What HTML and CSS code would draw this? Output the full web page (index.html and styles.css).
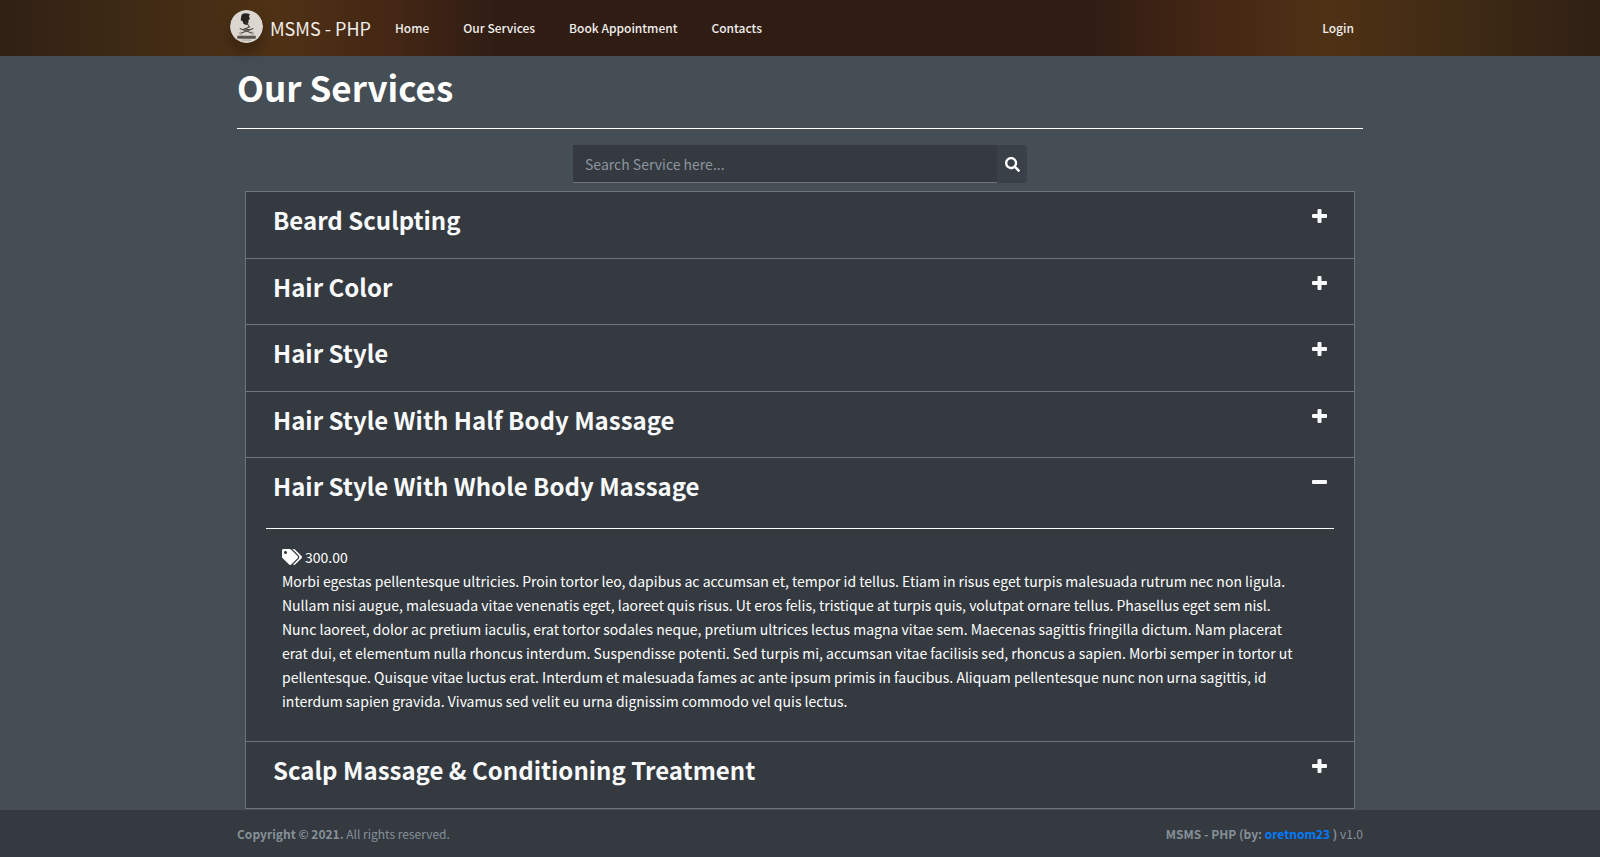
FILE: index.html
```
<!DOCTYPE html>
<html lang="en">
<head>
<meta charset="utf-8">
<meta name="viewport" content="width=device-width, initial-scale=1">
<title>MSMS - PHP</title>
<link rel="stylesheet" href="styles.css">
</head>
<body>
<svg class="sprite" aria-hidden="true">
  <symbol id="plus" viewBox="0 0 15 14"><path d="M6.500 0h2q1 0 1 1v4H14q1 0 1 1v2q0 1-1 1H9.500v4q0 1-1 1h-2q-1 0-1-1V9H1Q0 9 0 8V6q0-1 1-1h4.500V1q0-1 1-1z"/></symbol>
  <symbol id="minus" viewBox="0 0 15 14"><rect y="5" width="15" height="4" rx="1"/></symbol>
</svg>
<header class="navbar">
  <div class="container navbar-inner">
    <a class="brand" href="#">
      <svg class="logo" viewBox="0 0 34 34" aria-hidden="true">
        <circle cx="17" cy="17" r="17" fill="#dcd6d0"/>
        <path d="M11.500 7c0-3 3-4 6-3.500l3 .5-1 2.500 1 2.500-1.500 1.500v3l-2 2-3-1-1-3-2-1z" fill="#26221f"/>
        <path d="M17 13l3 4.500-5 2 6 1M10 19l13 5M24 19l-13 5" fill="none" stroke="#4b443e" stroke-width="1.100"/>
        <circle cx="11" cy="24" r="1.300" fill="none" stroke="#8d857e" stroke-width=".7"/>
        <circle cx="23" cy="24" r="1.300" fill="none" stroke="#8d857e" stroke-width=".7"/>
        <path d="M7.500 28h19" stroke="#5b544e" stroke-width="3"/>
        <path d="M12 31h10" stroke="#a39c95" stroke-width="1"/>
      </svg>
      <span>MSMS - PHP</span>
    </a>
    <nav class="nav">
      <a href="#">Home</a>
      <a href="#">Our Services</a>
      <a href="#">Book Appointment</a>
      <a href="#">Contacts</a>
    </nav>
    <a class="login" href="#">Login</a>
  </div>
</header>
<main class="container content">
  <h1 class="title">Our Services</h1>
  <hr class="rule">
  <form class="search" role="search">
    <input class="search-input" type="search" placeholder="Search Service here..." aria-label="Search Service">
    <button class="search-button" type="button" aria-label="Search">
      <svg viewBox="0 0 512 512" aria-hidden="true"><path d="M505 442.700L405.300 343c-4.500-4.500-10.600-7-17-7H372c27.600-35.300 44-79.700 44-128C416 93.100 322.900 0 208 0S0 93.100 0 208s93.100 208 208 208c48.300 0 92.700-16.400 128-44v16.300c0 6.400 2.500 12.500 7 17l99.700 99.700c9.400 9.400 24.600 9.400 33.900 0l28.300-28.300c9.400-9.400 9.400-24.600.1-34zM208 336c-70.700 0-128-57.200-128-128 0-70.700 57.200-128 128-128 70.700 0 128 57.200 128 128 0 70.700-57.200 128-128 128z"/></svg>
    </button>
  </form>
  <div class="services">
    <section class="service"><button class="service-head" type="button" aria-expanded="false"><span>Beard Sculpting</span><svg class="toggle"><use href="#plus"/></svg></button></section>
    <section class="service"><button class="service-head" type="button" aria-expanded="false"><span>Hair Color</span><svg class="toggle"><use href="#plus"/></svg></button></section>
    <section class="service"><button class="service-head" type="button" aria-expanded="false"><span>Hair Style</span><svg class="toggle"><use href="#plus"/></svg></button></section>
    <section class="service"><button class="service-head" type="button" aria-expanded="false"><span>Hair Style With Half Body Massage</span><svg class="toggle"><use href="#plus"/></svg></button></section>
    <section class="service">
      <button class="service-head" type="button" aria-expanded="true"><span>Hair Style With Whole Body Massage</span><svg class="toggle"><use href="#minus"/></svg></button>
      <div class="service-body">
        <div class="price">
          <svg class="tags" viewBox="0 0 640 512" aria-hidden="true"><path d="M497.941 225.941L286.059 14.059A48 48 0 0 0 252.118 0H48C21.490 0 0 21.490 0 48v204.118a48 48 0 0 0 14.059 33.941l211.882 211.882c18.744 18.745 49.136 18.746 67.882 0l204.118-204.118c18.745-18.745 18.745-49.137 0-67.882zM112 160c-26.510 0-48-21.490-48-48s21.490-48 48-48 48 21.490 48 48-21.490 48-48 48zm513.941 133.823L421.823 497.941c-18.745 18.745-49.137 18.745-67.882 0l-.36-.36L527.640 323.522c16.999-16.999 26.360-39.600 26.360-63.640s-9.362-46.641-26.360-63.640L331.397 0h48.721a48 48 0 0 1 33.941 14.059l211.882 211.882c18.745 18.745 18.745 49.137 0 67.882z"/></svg>
          <span>300.00</span>
        </div>
        <p class="description">Morbi egestas pellentesque ultricies. Proin tortor leo, dapibus ac accumsan et, tempor id tellus. Etiam in risus eget turpis malesuada rutrum nec non ligula. Nullam nisi augue, malesuada vitae venenatis eget, laoreet quis risus. Ut eros felis, tristique at turpis quis, volutpat ornare tellus. Phasellus eget sem nisl. Nunc laoreet, dolor ac pretium iaculis, erat tortor sodales neque, pretium ultrices lectus magna vitae sem. Maecenas sagittis fringilla dictum. Nam placerat erat dui, et elementum nulla rhoncus interdum. Suspendisse potenti. Sed turpis mi, accumsan vitae facilisis sed, rhoncus a sapien. Morbi semper in tortor ut pellentesque. Quisque vitae luctus erat. Interdum et malesuada fames ac ante ipsum primis in faucibus. Aliquam pellentesque nunc non urna sagittis, id interdum sapien gravida. Vivamus sed velit eu urna dignissim commodo vel quis lectus.</p>
      </div>
    </section>
    <section class="service"><button class="service-head" type="button" aria-expanded="false"><span>Scalp Massage &amp; Conditioning Treatment</span><svg class="toggle"><use href="#plus"/></svg></button></section>
  </div>
</main>
<footer class="footer">
  <div class="container footer-inner">
    <span><strong>Copyright © 2021.</strong> All rights reserved.</span>
    <span><strong>MSMS - PHP (by: <a href="#">oretnom23</a> )</strong> v1.0</span>
  </div>
</footer>
</body>
</html>
```
FILE: styles.css
```
* { box-sizing: border-box; }

body {
  margin: 0;
  min-height: 100vh;
  display: flex;
  flex-direction: column;
  background: #454d55;
  color: #fff;
  font-family: "Source Sans Pro", "Noto Sans CJK SC", sans-serif;
  font-size: 14px;
  line-height: 24px;
}

a { color: inherit; text-decoration: none; }
button, input { font: inherit; color: inherit; }
svg { fill: currentColor; flex: none; }
.sprite { display: none; }

.container {
  width: 100%;
  max-width: 1140px;
  margin: 0 auto;
  padding: 0 7px;
}

.navbar {
  height: 56px;
  background: linear-gradient(90deg, #302015 0, #3a2814 6%, #4f3215 17%, #432614 25%, #2f1d14 31%, #2f1d14 68%, #432614 75%, #4f3215 83%, #3a2814 94%, #302015 100%);
  color: #f0eeec;
}
.navbar-inner {
  display: flex;
  align-items: center;
  height: 100%;
  padding: 0 16px 0 0;
}
.brand {
  display: flex;
  align-items: center;
  gap: 7px;
  margin-right: 24px;
  font-size: 18px;
}
.logo {
  width: 33px;
  height: 33px;
  margin-bottom: 3px;
  border-radius: 50%;
  box-shadow: 0 8px 16px rgba(0, 0, 0, .3);
}
.nav { display: flex; gap: 34px; }
.nav, .login { font-size: 12px; font-weight: 500; }
.login { margin-left: auto; }

.content { flex: 1; }
.title {
  margin: 7px 0 17px;
  font-size: 35px;
  font-weight: 700;
  line-height: 48px;
}
.rule { margin: 0 0 16px; border: 0; border-top: 1px solid #fff; }

.search {
  display: flex;
  width: 454px;
  max-width: 100%;
  margin: 0 auto 8px;
}
.search-input {
  flex: 1;
  min-width: 0;
  height: 38px;
  padding: 0 12px;
  border: 0;
  border-bottom: 1px solid #6c757d;
  border-radius: 0;
  background: #343a40;
  appearance: none;
  outline: 0;
}
.search-input::placeholder { color: #8c959e; opacity: 1; }
.search-button {
  display: grid;
  place-items: center;
  width: 30px;
  padding: 0;
  border: 0;
  border-radius: 0 4px 4px 0;
  background: #3a4047;
  color: #fff;
}
.search-button svg { width: 15px; height: 15px; }

.services {
  margin: 0 8px 1px;
  border: 1px solid #6c757d;
  border-top: 0;
  background: #343a40;
}
.service { padding: 0 20px; border-top: 1px solid #6c757d; }
.service-head {
  display: flex;
  justify-content: space-between;
  align-items: flex-start;
  width: 100%;
  padding: 11px 7px 21px;
  border: 0;
  background: none;
  font-size: 24px;
  font-weight: 700;
  line-height: 1.4;
  color: #f8f9fa;
  text-align: left;
}
.toggle { width: 15px; height: 14px; margin-top: 6px; }
.service-body {
  margin-top: 4px;
  padding: 16px 32px 28px 16px;
  border-top: 1px solid #fff;
}
.price { display: flex; align-items: center; gap: 3px; }
.tags { width: 20px; height: 16px; }
.description { margin: 0; }

.footer {
  background: #343a40;
  color: #869099;
  font-size: 12px;
}
.footer-inner {
  display: flex;
  justify-content: space-between;
  padding: 12px 7px;
}
.footer strong { font-weight: 700; }
.footer a { color: #007bff; }
```
